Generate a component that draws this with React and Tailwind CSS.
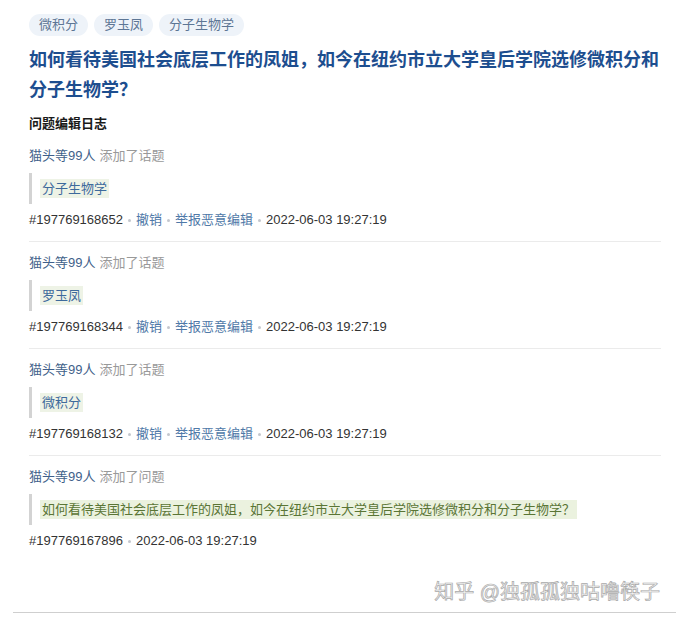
const font = { fontFamily: '"Liberation Sans", "Noto Sans CJK SC", sans-serif' };

const tags = ["微积分", "罗玉凤", "分子生物学"];

const logs = [
  { id: "197769168652", action: "添加了话题", text: "分子生物学", topic: true },
  { id: "197769168344", action: "添加了话题", text: "罗玉凤", topic: true },
  { id: "197769168132", action: "添加了话题", text: "微积分", topic: true },
  {
    id: "197769167896",
    action: "添加了问题",
    text: "如何看待美国社会底层工作的凤姐，如今在纽约市立大学皇后学院选修微积分和分子生物学？",
    topic: false,
  },
];

function Dot() {
  return <span className="mx-[5px] inline-block h-[3px] w-[3px] rounded-full bg-[#c4c7ce] align-middle" />;
}

function LogItem({ log, last }) {
  return (
    <div className={`pt-[11px] ${last ? "" : "border-b border-[#ebebeb] pb-[11px]"}`}>
      <div className="text-[13px] leading-5">
        <span className="text-[#3f5f8a]">猫头等99人</span>
        <span className="ml-[4px] text-[#999]">{log.action}</span>
      </div>
      <div className="mt-[7px] flex h-[31px] items-center border-l-[3px] border-[#d3d3d3] pl-[8px]">
        <span
          className={`px-[2px] text-[13px] leading-[19px] ${
            log.topic ? "bg-[#eef3e6] text-[#3d6a9c]" : "bg-[#ebf2df] text-[#5a7535]"
          }`}
        >
          {log.text}
        </span>
      </div>
      <div className="mt-[6px] flex items-center text-[13px] leading-5 text-[#333]">
        <span>#{log.id}</span>
        {log.topic && (
          <>
            <Dot />
            <span className="text-[#4f79a8]">撤销</span>
            <Dot />
            <span className="text-[#4f79a8]">举报恶意编辑</span>
          </>
        )}
        <Dot />
        <span>2022-06-03 19:27:19</span>
      </div>
    </div>
  );
}

export default function App() {
  return (
    <div className="h-[619px] w-[676px] bg-white pl-[13px]" style={font}>
      <div className="flex h-[613px] flex-col border-b border-[#cfcfcf] pl-4 pr-[15px] pt-[14px]">
        <div className="flex gap-[6px]">
          {tags.map((t) => (
            <span
              key={t}
              className="flex h-[22px] items-center rounded-full bg-[#eef3f9] px-[10px] text-[13px] text-[#5d7695]"
            >
              {t}
            </span>
          ))}
        </div>
        <h1 className="mt-[9px] whitespace-nowrap text-[18px] font-bold leading-[30px] text-[#1d4e8f]">
          如何看待美国社会底层工作的凤姐，如今在纽约市立大学皇后学院选修微积分和
          <br />
          分子生物学？
        </h1>
        <div className="mt-[9px] text-[13px] font-bold leading-5 text-[#1a1a1a]">问题编辑日志</div>
        <div className="mt-px">
          {logs.map((log, i) => (
            <LogItem key={log.id} log={log} last={i === logs.length - 1} />
          ))}
        </div>
        <div className="mt-[28px] flex justify-end pr-[1px]">
          <span className="text-[20px] leading-[26px] text-[#f4f4f4] [-webkit-text-stroke:0.7px_#a9a9a9]">
            知乎 @独孤孤独咕噜筷子
          </span>
        </div>
      </div>
    </div>
  );
}
